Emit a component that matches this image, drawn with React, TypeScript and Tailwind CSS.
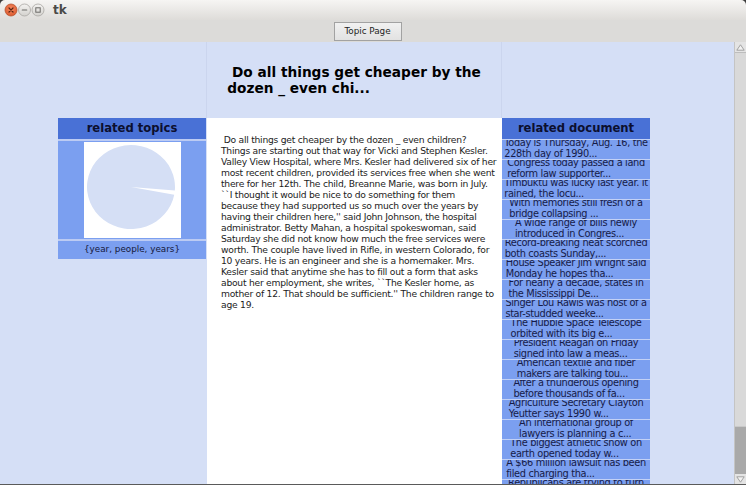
import React from "react";

const docs: [string, string][] = [
  ["Today is Thursday, Aug. 16, the", "228th day of 1990..."],
  ["Congress today passed a land", "reform law supporter..."],
  ["Timbuktu was lucky last year. It", "rained, the locu..."],
  ["With memories still fresh of a", "bridge collapsing ..."],
  ["A wide range of bills newly", "introduced in Congres..."],
  ["Record-breaking heat scorched", "both coasts Sunday,..."],
  ["House Speaker Jim Wright said", "Monday he hopes tha..."],
  ["For nearly a decade, states in", "the Mississippi De..."],
  ["Singer Lou Rawls was host of a", "star-studded weeke..."],
  ["The Hubble Space Telescope", "orbited with its big e..."],
  ["President Reagan on Friday", "signed into law a meas..."],
  ["American textile and fiber", "makers are talking tou..."],
  ["After a thunderous opening", "before thousands of fa..."],
  ["Agriculture Secretary Clayton", "Yeutter says 1990 w..."],
  ["An international group of", "lawyers is planning a c..."],
  ["The biggest athletic show on", "earth opened today w..."],
  ["A $66 million lawsuit has been", "filed charging tha..."],
  ["Republicans are trying to turn", "the tables on ..."],
];

const body: string[] = [
  " Do all things get cheaper by the dozen _ even children?",
  "Things are starting out that way for Vicki and Stephen Kesler.",
  "Valley View Hospital, where Mrs. Kesler had delivered six of her",
  "most recent children, provided its services free when she went",
  "there for her 12th. The child, Breanne Marie, was born in July.",
  "``I thought it would be nice to do something for them",
  "because they had supported us so much over the years by",
  "having their children here,'' said John Johnson, the hospital",
  "administrator. Betty Mahan, a hospital spokeswoman, said",
  "Saturday she did not know how much the free services were",
  "worth. The couple have lived in Rifle, in western Colorado, for",
  "10 years. He is an engineer and she is a homemaker. Mrs.",
  "Kesler said that anytime she has to fill out a form that asks",
  "about her employment, she writes, ``The Kesler home, as",
  "mother of 12. That should be sufficient.'' The children range to",
  "age 19.",
];

function WindowControls() {
  return (
    <svg width="46" height="20" viewBox="0 0 46 20" className="ml-[4px]">
      <defs>
        <radialGradient id="cl" cx="50%" cy="40%" r="60%">
          <stop offset="0%" stopColor="#f58a62" />
          <stop offset="100%" stopColor="#dc5a2e" />
        </radialGradient>
        <linearGradient id="gb" x1="0" y1="0" x2="0" y2="1">
          <stop offset="0%" stopColor="#f4f3f1" />
          <stop offset="100%" stopColor="#d3d1cd" />
        </linearGradient>
      </defs>
      <circle cx="7" cy="10" r="6" fill="url(#cl)" stroke="#b9532f" strokeWidth="0.8" />
      <path d="M5 8 L9 12 M9 8 L5 12" stroke="#5a2412" strokeWidth="1.2" strokeLinecap="round" />
      <circle cx="20.5" cy="10" r="6" fill="url(#gb)" stroke="#a8a6a2" strokeWidth="0.8" />
      <path d="M18.3 10 L22.7 10" stroke="#6b6a67" strokeWidth="1.2" strokeLinecap="round" />
      <circle cx="34" cy="10" r="6" fill="url(#gb)" stroke="#a8a6a2" strokeWidth="0.8" />
      <rect x="31.8" y="7.8" width="4.4" height="4.4" fill="none" stroke="#6b6a67" strokeWidth="1" />
    </svg>
  );
}

function Pie() {
  return (
    <svg width="97" height="96" viewBox="0 0 97 96" className="block">
      <rect x="0" y="0" width="97" height="96" fill="#ffffff" />
      <path
        d="M47 45 L90.23 52.8 A44 42 0 1 1 90.85 48.44 Z"
        fill="#d5dff5"
      />
    </svg>
  );
}

function Scrollbar() {
  return (
    <div className="w-[12px] h-full flex flex-col bg-[#dcdcdc] border-l border-[#c4c4c4]">
      <div className="h-[11px] shrink-0 flex items-center justify-center bg-[#e4e4e4] border-b border-[#bdbdbd]">
        <svg width="9" height="7" viewBox="0 0 9 7">
          <path d="M4.5 0.8 L8.2 6.2 L0.8 6.2 Z" fill="#f2f2f2" stroke="#9a9a9a" strokeWidth="0.9" />
        </svg>
      </div>
      <div className="flex-1 bg-[#d9d9d9]" />
      <div className="h-[48px] shrink-0 bg-[#a9a9a9] border-t border-[#c9c9c9]" />
      <div className="h-[10px] shrink-0 flex items-center justify-center bg-[#e4e4e4]">
        <svg width="9" height="7" viewBox="0 0 9 7">
          <path d="M0.8 0.8 L8.2 0.8 L4.5 6.2 Z" fill="#f2f2f2" stroke="#9a9a9a" strokeWidth="0.9" />
        </svg>
      </div>
    </div>
  );
}

export default function App() {
  return (
    <div className="w-[746px] h-[485px] overflow-hidden flex flex-col bg-[#3c3c3c] font-['DejaVu_Sans',sans-serif]">
      {/* title bar */}
      <div className="h-[20px] shrink-0 rounded-t-[5px] bg-linear-to-b from-[#f6f5f3] to-[#dedcd9] flex items-center">
        <WindowControls />
        <span className="ml-[3px] text-[12px] font-bold text-[#4a4a48] leading-none">tk</span>
      </div>

      {/* toolbar */}
      <div className="h-[22px] shrink-0 bg-[#dcdbd9] flex justify-center pr-[12px] pt-[2px]">
        <button className="h-[19px] w-[68px] ml-[1px] border border-[#a2a2a2] bg-linear-to-b from-[#f1f1f1] to-[#e2e2e2] text-[8.8px] text-[#1e1e1e] leading-none">
          Topic Page
        </button>
      </div>

      {/* main */}
      <div className="flex-1 flex min-h-0 border-b border-[#5a5a5a]">
        <div className="w-[734px] flex flex-col bg-[#d5dff6]">
          {/* header row */}
          <div className="h-[76px] shrink-0 flex">
            <div className="w-[207px] border-r border-[#cbd5ee]" />
            <div className="w-[295px] border-r border-[#cbd5ee] flex items-center justify-center">
              <div className="whitespace-pre font-bold text-[13.7px] leading-[16.5px] text-black">
                <div>{" Do all things get cheaper by the"}</div>
                <div>{"dozen _ even chi..."}</div>
              </div>
            </div>
            <div className="flex-1" />
          </div>

          {/* content row */}
          <div className="flex-1 flex min-h-0">
            {/* related topics */}
            <div className="w-[207px] shrink-0">
              <div className="ml-[58px] w-[148px] flex flex-col">
                <div className="h-[21px] bg-[#4971d6] flex items-center justify-center text-[11.6px] font-bold text-[#0c0f2e]">
                  related topics
                </div>
                <div className="h-[2px] bg-[#bccbf3]" />
                <div className="h-[98px] bg-[#7b9ff0] flex items-center justify-center">
                  <Pie />
                </div>
                <div className="h-[2px] bg-[#bccbf3]" />
                <div className="h-[18px] bg-[#7b9ff0] flex items-center justify-center text-[8.8px] text-[#15183a]">
                  {"{year, people, years}"}
                </div>
              </div>
            </div>

            {/* body text */}
            <div className="w-[295px] shrink-0 bg-white overflow-hidden pl-[14px] pt-[16px]">
              <div className="whitespace-pre text-[9.2px] leading-[11px] tracking-[-0.25px] text-[#1c1c1c]">
                {body.map((l, i) => (
                  <div key={i}>{l}</div>
                ))}
              </div>
            </div>

            {/* related documents */}
            <div className="flex-1 min-w-0 overflow-hidden">
              <div className="w-[148px] flex flex-col">
                <div className="h-[21px] shrink-0 bg-[#4971d6] flex items-center justify-center text-[11.6px] font-bold text-[#0c0f2e]">
                  related document
                </div>
                {docs.map(([a, b], i) => (
                  <div
                    key={i}
                    className="h-[20px] shrink-0 border-t border-[#c2d1f6] bg-[#7b9ff0] flex items-center justify-center overflow-hidden"
                  >
                    <div className="whitespace-pre shrink-0 -mt-[1.5px] text-[9.8px] leading-[10.5px] tracking-[-0.35px] text-[#161b48]">
                      <div>{a}</div>
                      <div>{b}</div>
                    </div>
                  </div>
                ))}
              </div>
            </div>
          </div>
        </div>
        <Scrollbar />
      </div>
    </div>
  );
}
